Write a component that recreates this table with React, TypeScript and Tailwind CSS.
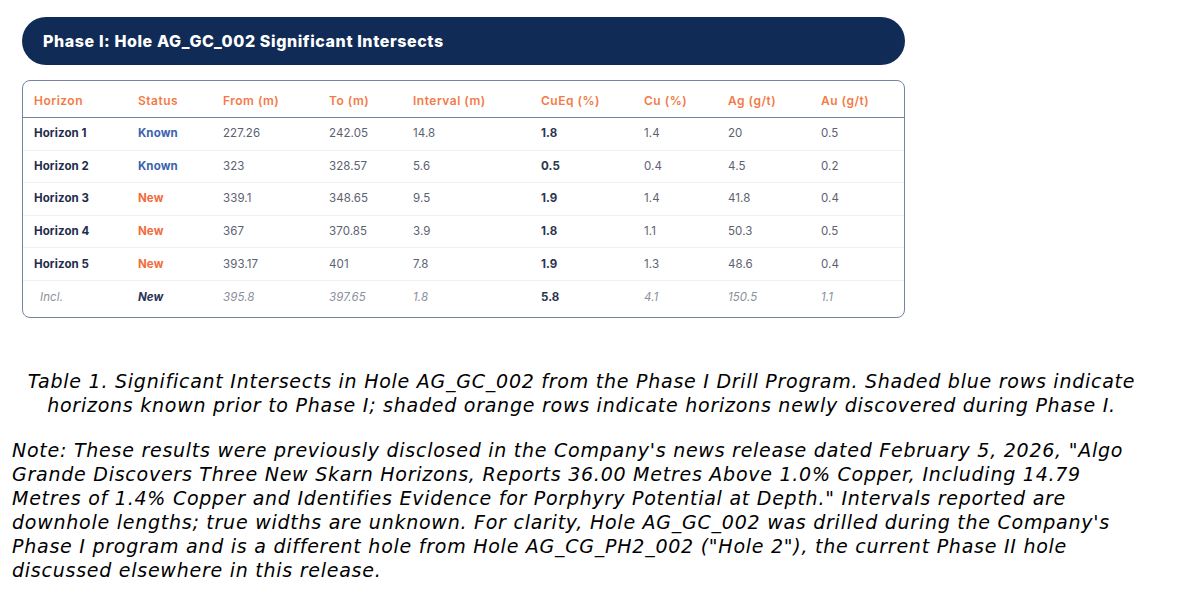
import React from "react";

type Row = {
  h: string;
  s: string;
  v: string[];
  incl?: boolean;
};

const rows: Row[] = [
  { h: "Horizon 1", s: "Known", v: ["227.26", "242.05", "14.8", "1.8", "1.4", "20", "0.5"] },
  { h: "Horizon 2", s: "Known", v: ["323", "328.57", "5.6", "0.5", "0.4", "4.5", "0.2"] },
  { h: "Horizon 3", s: "New", v: ["339.1", "348.65", "9.5", "1.9", "1.4", "41.8", "0.4"] },
  { h: "Horizon 4", s: "New", v: ["367", "370.85", "3.9", "1.8", "1.1", "50.3", "0.5"] },
  { h: "Horizon 5", s: "New", v: ["393.17", "401", "7.8", "1.9", "1.3", "48.6", "0.4"] },
  { h: "Incl.", s: "New", v: ["395.8", "397.65", "1.8", "5.8", "4.1", "150.5", "1.1"], incl: true },
];

const headers = ["Horizon", "Status", "From (m)", "To (m)", "Interval (m)", "CuEq (%)", "Cu (%)", "Ag (g/t)", "Au (g/t)"];

const gridCols = "grid grid-cols-[104px_85px_106px_84px_128px_103px_84px_93px_1fr] pl-[11px] items-center";

export default function App() {
  return (
    <div className="w-[1196px] h-[593px] bg-white overflow-hidden">
      <div className="pt-[17px] pl-[22px] w-[905px]">
        <div className="h-[48px] w-[883px] rounded-full bg-[#102b56] flex items-center pl-[21px]">
          <span className="text-white font-extrabold text-[16px] tracking-[0.6px] [font-family:Inter,'Open_Sans',sans-serif]">
            Phase I: Hole AG_GC_002 Significant Intersects
          </span>
        </div>
        <div className="mt-[15px] w-[883px] h-[238px] border-[1.5px] border-[#7484a3] rounded-[8px] [font-family:Inter,'Open_Sans',sans-serif] text-[11.5px] tracking-[0.1px]">
          <div className={`${gridCols} h-[37px] pt-[4px] border-b-[1.5px] border-[#7484a3]`}>
            {headers.map((t) => (
              <span key={t} className="text-[#f47a47] font-semibold text-[12px] tracking-[0.5px]">
                {t}
              </span>
            ))}
          </div>
          {rows.map((r, i) => (
            <div
              key={r.h}
              className={`${gridCols} h-[32.6px] ${i < rows.length - 1 ? "border-b border-[#eef0f4]" : ""}`}
            >
              {r.incl ? (
                <span className="italic text-[#8b909c] pl-[6px]">{r.h}</span>
              ) : (
                <span className="font-bold text-[#1f2c4c]">{r.h}</span>
              )}
              <span
                className={`font-bold ${r.incl ? "italic text-[#2b3656]" : r.s === "Known" ? "text-[#3c63ae]" : "text-[#f36b3b]"}`}
              >
                {r.s}
              </span>
              {r.v.map((val, j) => (
                <span
                  key={j}
                  className={
                    j === 3
                      ? "font-bold text-[#2a3450]"
                      : r.incl
                      ? "italic text-[#8b909c]"
                      : "text-[#5c6170]"
                  }
                >
                  {val}
                </span>
              ))}
            </div>
          ))}
        </div>
      </div>

      <div className="ml-[12px] w-[1139px] mt-[51px] text-black italic text-[19px] tracking-[0.75px] leading-[24px] [font-family:'DejaVu_Sans',Verdana,sans-serif]">
        <p className="text-center">
          <span className="block whitespace-nowrap">
            Table 1. Significant Intersects in Hole AG_GC_002 from the Phase I Drill Program. Shaded blue rows indicate
          </span>
          <span className="block whitespace-nowrap">
            horizons known prior to Phase I; shaded orange rows indicate horizons newly discovered during Phase I.
          </span>
        </p>
        <p className="mt-[21px]">
          <span className="block whitespace-nowrap">
            Note: These results were previously disclosed in the Company's news release dated February 5, 2026, "Algo
          </span>
          <span className="block whitespace-nowrap">
            Grande Discovers Three New Skarn Horizons, Reports 36.00 Metres Above 1.0% Copper, Including 14.79
          </span>
          <span className="block whitespace-nowrap">
            Metres of 1.4% Copper and Identifies Evidence for Porphyry Potential at Depth." Intervals reported are
          </span>
          <span className="block whitespace-nowrap">
            downhole lengths; true widths are unknown. For clarity, Hole AG_GC_002 was drilled during the Company's
          </span>
          <span className="block whitespace-nowrap">
            Phase I program and is a different hole from Hole AG_CG_PH2_002 ("Hole 2"), the current Phase II hole
          </span>
          <span className="block whitespace-nowrap">discussed elsewhere in this release.</span>
        </p>
      </div>
    </div>
  );
}
